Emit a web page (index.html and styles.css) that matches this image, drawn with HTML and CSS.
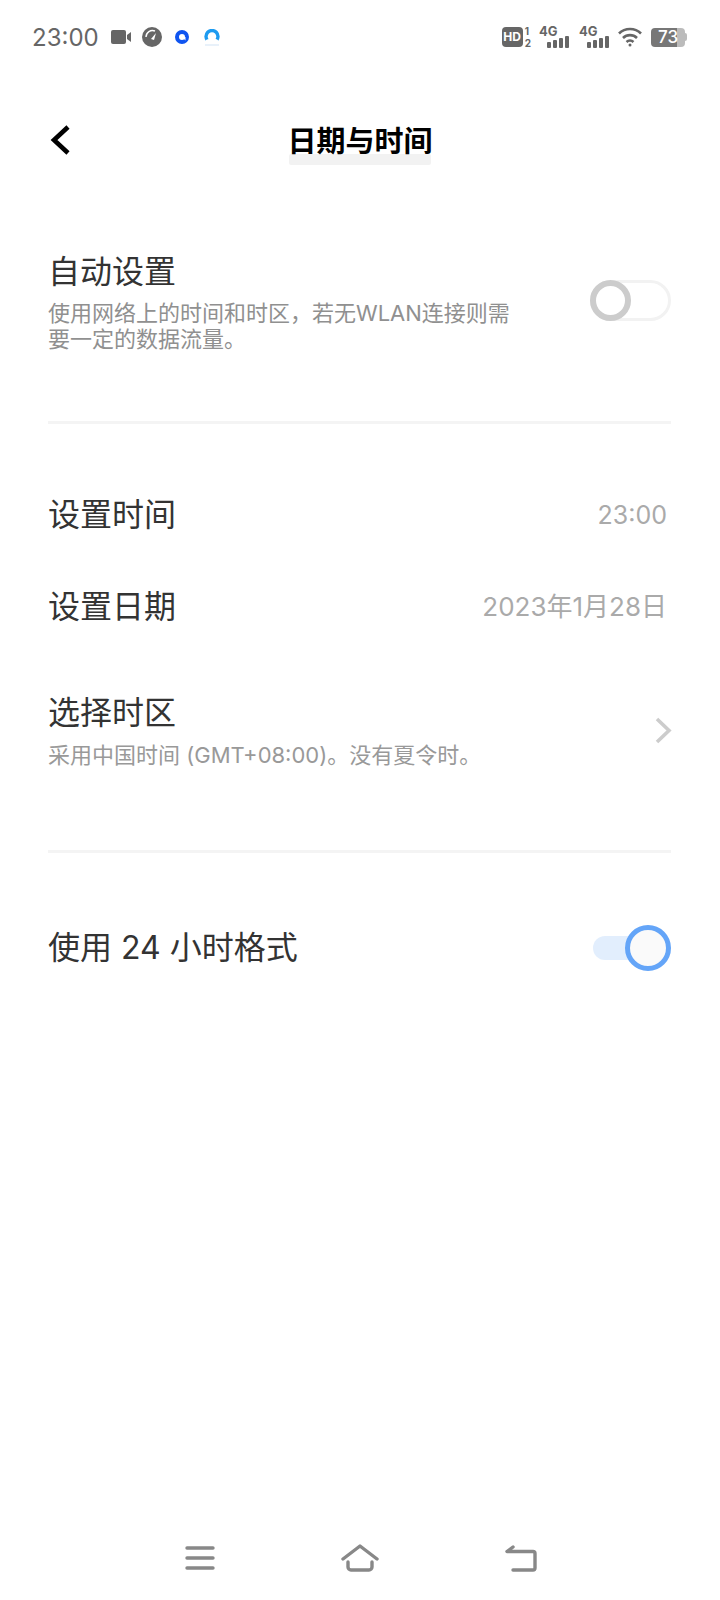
FILE: index.html
```html
<!DOCTYPE html>
<html lang="zh-CN">
<head>
  <meta charset="UTF-8">
  <title>日期与时间</title>
  <link rel="stylesheet" href="styles.css">
</head>
<body>
  <div id="page">
    <div class="status">
      <span class="clock">23:00</span>
      <div class="notify">
        <svg width="21" height="14" viewBox="0 0 21 14"><rect x="0" y="0" width="15" height="14" rx="2" fill="#666"/><path d="M16 5l4-3v10l-4-3z" fill="#666"/></svg>
        <svg width="20" height="20" viewBox="0 0 20 20"><circle cx="10" cy="10" r="10" fill="#666"/><path d="M4 10a6.500 6.500 0 0 1 9-6" fill="none" stroke="#fff" stroke-width="1.400"/><path d="M9 12l5-6-2 7z" fill="#fff"/></svg>
        <svg class="ring" width="14" height="14" viewBox="0 0 14 14"><circle cx="7" cy="7" r="5" fill="none" stroke="#0f54f0" stroke-width="4"/><path d="M7 7h3.500v3.500z" fill="#fff"/></svg>
        <svg class="cloud" width="16" height="17" viewBox="0 0 16 17"><circle cx="8" cy="7.500" r="6" fill="none" stroke="#1d9bf0" stroke-width="3.400"/><path d="M1 16c-1-3 1-6 4-6 1-2 5-2 6 0 3 0 4 2 4 6z" fill="#fff"/><path d="M1 15h14v2H1z" fill="#e8f1fa"/></svg>
      </div>
      <div class="indicators">
        <div class="hd"><span class="hd-box">HD</span><span class="hd-sims"><b>1</b><b>2</b></span></div>
        <div class="signal"><span class="net">4G</span><svg width="23" height="12" viewBox="0 0 23 12"><rect x="0" y="6" width="4" height="6" rx="1"/><rect x="6" y="4" width="4" height="8" rx="1"/><rect x="12" y="2" width="4" height="10" rx="1"/><rect x="18" y="0" width="4" height="12" rx="1"/></svg></div>
        <div class="signal"><span class="net">4G</span><svg width="23" height="12" viewBox="0 0 23 12"><rect x="0" y="6" width="4" height="6" rx="1"/><rect x="6" y="4" width="4" height="8" rx="1"/><rect x="12" y="2" width="4" height="10" rx="1"/><rect x="18" y="0" width="4" height="12" rx="1"/></svg></div>
        <svg class="wifi" width="24" height="20" viewBox="0 0 24 20" fill="none" stroke="#666" stroke-width="2.600"><path d="M1 6.500c6-6 16-6 22 0"/><path d="M5 11c4-3.800 10-3.800 14 0"/><path d="M8.500 15c2-1.800 5-1.800 7 0"/><circle cx="12" cy="18" r="1.500" fill="#666" stroke="none"/></svg>
        <div class="battery"><div class="battery-fill"><span>73</span></div><div class="battery-cap"></div></div>
      </div>
    </div>

    <div class="head">
      <svg class="back" width="21" height="32" viewBox="0 0 21 32"><path d="M18 3L4 16l14 13" fill="none" stroke="#000" stroke-width="4.600"/></svg>
      <h1>日期与时间</h1>
    </div>

    <div class="section section-auto">
      <div class="row">
        <div class="text">
          <div class="label">自动设置</div>
          <div class="hint">使用网络上的时间和时区，若无WLAN连接则需<br>要一定的数据流量。</div>
        </div>
        <div class="switch"><div class="knob"></div></div>
      </div>
    </div>

    <div class="section section-time">
      <div class="row row-value">
        <div class="label">设置时间</div>
        <div class="value value-time">23:00</div>
      </div>
      <div class="row row-value row-date">
        <div class="label">设置日期</div>
        <div class="value">2023年1月28日</div>
      </div>
      <div class="row row-zone">
        <div class="text">
          <div class="label">选择时区</div>
          <div class="hint">采用中国时间 (GMT+08:00)。没有夏令时。</div>
        </div>
        <svg class="more" width="19" height="27" viewBox="0 0 19 27"><path d="M3 2l12 11.500L3 25" fill="none" stroke="#ccc" stroke-width="3.600"/></svg>
      </div>
    </div>

    <div class="section section-format">
      <div class="row row-value">
        <div class="label">使用 24 小时格式</div>
        <div class="switch switch-on"><div class="knob"></div></div>
      </div>
    </div>

    <div class="nav">
      <svg width="30" height="24" viewBox="0 0 30 24" fill="none" stroke="#888" stroke-width="3.400" stroke-linecap="round"><path d="M2 2h26M2 12h26M2 22h26"/></svg>
      <svg width="38" height="28" viewBox="0 0 38 28" fill="none" stroke="#888" stroke-width="3.400" stroke-linecap="round" stroke-linejoin="round"><path d="M2 15L19 2l17 13"/><path d="M7 18v5a3 3 0 0 0 3 3h18a3 3 0 0 0 3-3v-5"/></svg>
      <svg width="32" height="27" viewBox="0 0 32 27" fill="none" stroke="#888" stroke-width="3.400" stroke-linecap="round" stroke-linejoin="round"><path d="M8 2L2 6.500h26a2 2 0 0 1 2 2V23a2 2 0 0 1-2 2H8"/></svg>
    </div>
  </div>
</body>
</html>
```

FILE: styles.css
```css
* {
  padding: 0;
  margin: 0;
  box-sizing: border-box;
}
body {
  background: #fff;
  font-family: Inter, "Noto Sans CJK SC", sans-serif;
}
#page {
  width: 720px;
  height: 1600px;
  display: flex;
  flex-direction: column;
}

/* status bar */
.status {
  height: 74px;
  display: flex;
  align-items: center;
  padding: 0 33px 0 32px;
  color: #666;
}
.clock {
  font-size: 24px;
  width: 79px;
}
.notify {
  display: flex;
  align-items: center;
  gap: 10px;
}
.ring {
  margin-left: 3px;
}
.cloud {
  margin-left: 5px;
}
.indicators {
  margin-left: auto;
  display: flex;
  align-items: center;
}
.hd {
  display: flex;
  align-items: center;
  gap: 2px;
}
.hd-box {
  width: 21px;
  height: 20px;
  border-radius: 4px;
  background: #666;
  color: #fff;
  font-size: 12px;
  font-weight: 700;
  line-height: 20px;
  text-align: center;
}
.hd-sims {
  display: flex;
  flex-direction: column;
  font-size: 10px;
  line-height: 12.5px;
}
.hd-sims b {
  font-weight: 700;
}
.signal {
  width: 31px;
  height: 22px;
  margin-left: 8px;
  position: relative;
}
.signal svg {
  position: absolute;
  right: 0;
  bottom: 0;
  fill: #666;
}
.net {
  position: absolute;
  left: 0;
  top: -2px;
  font-size: 13px;
  font-weight: 700;
  line-height: 14px;
}
.signal + .signal {
  margin-left: 9px;
}
.wifi {
  margin-left: 8px;
}
.battery {
  display: flex;
  align-items: center;
  margin-left: 9px;
}
.battery-fill {
  width: 34px;
  height: 19px;
  border-radius: 4px;
  background: linear-gradient(to right, #777 75%, #bbb 75%);
  color: #fff;
  font-size: 17px;
  font-weight: 500;
  line-height: 19px;
  text-align: center;
}
.battery-cap {
  width: 2px;
  height: 8px;
  background: #bbb;
  border-radius: 0 2px 2px 0;
}

/* title bar */
.head {
  height: 132px;
  padding-top: 4px;
  display: flex;
  align-items: center;
  justify-content: center;
  position: relative;
}
.back {
  position: absolute;
  left: 50px;
  top: 50px;
}
.head h1 {
  font-size: 29px;
  font-weight: 700;
  line-height: 40px;
  color: #000;
  position: relative;
}
.head h1::after {
  content: "";
  position: absolute;
  left: 2px;
  right: 2px;
  bottom: -3px;
  height: 11px;
  background: #f2f2f2;
  border-radius: 2px;
  z-index: -1;
}

/* settings list */
.section {
  margin: 0 49px 0 48px;
}
.section-auto {
  padding: 46px 0 69px;
  border-bottom: 3px solid #f4f4f4;
}
.section-time {
  padding: 71px 0 82px;
  border-bottom: 3px solid #f4f4f4;
}
.section-format {
  padding-top: 75px;
}
.row {
  display: flex;
  align-items: center;
  justify-content: space-between;
}
.row-date {
  margin-top: 52px;
}
.row-zone {
  margin-top: 66px;
}
.label {
  font-size: 32px;
  line-height: 40px;
  color: #333;
}
.hint {
  margin-top: 8px;
  font-size: 22px;
  line-height: 26px;
  color: #909090;
}
.row-zone .hint {
  margin-top: 9px;
  color: #999;
}
.value {
  font-size: 26px;
  line-height: 40px;
  color: #aaa;
  margin-right: 4px;
}
.value-time {
  font-size: 25px;
}
.more {
  margin-right: -2px;
}

/* switches */
.switch {
  width: 81px;
  height: 41px;
  border: 3px solid #f2f2f2;
  border-radius: 21px;
  position: relative;
  margin-top: -4px;
}
.knob {
  position: absolute;
  left: -3px;
  top: -3px;
  width: 41px;
  height: 41px;
  border: 6px solid #ccc;
  border-radius: 50%;
  background: #fff;
}
.switch-on {
  width: 78px;
  height: 24px;
  border: 0;
  background: linear-gradient(to right, #e2eefd 60%, #fff 60%);
  margin-top: 0;
}
.switch-on .knob {
  left: auto;
  right: 0;
  top: -11px;
  width: 46px;
  height: 46px;
  border: 5px solid #64a5f8;
  background: #fafafa;
}

/* navigation bar */
.nav {
  margin-top: auto;
  height: 30px;
  margin-bottom: 27px;
  display: flex;
  align-items: center;
  gap: 126px;
  padding-left: 185px;
}
```
